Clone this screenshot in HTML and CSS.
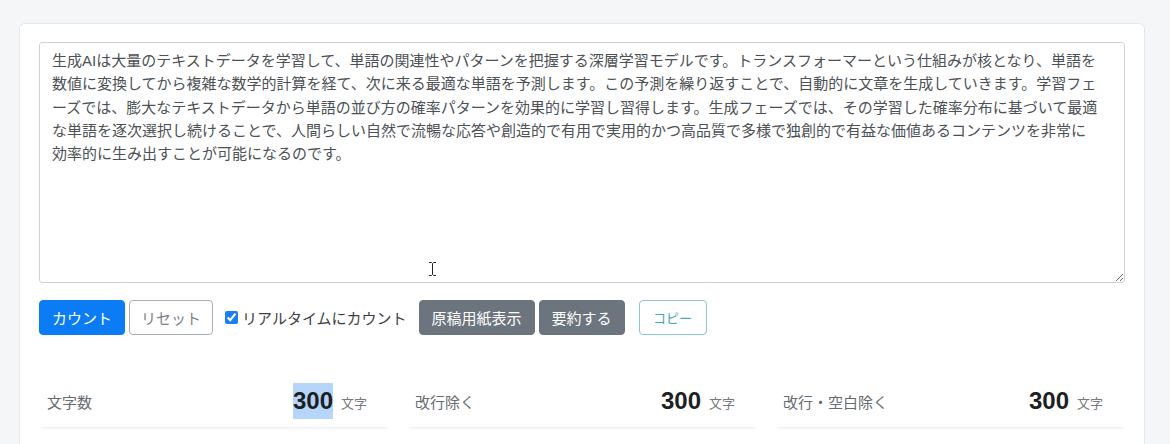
FILE: index.html
```html
<!DOCTYPE html>
<html lang="ja">
<head>
<meta charset="utf-8">
<title>文字数カウント</title>
<link rel="stylesheet" href="styles.css">
</head>
<body>
<main class="card">
  <div class="editor">
    <textarea class="text-input" spellcheck="false">生成AIは大量のテキストデータを学習して、単語の関連性やパターンを把握する深層学習モデルです。トランスフォーマーという仕組みが核となり、単語を数値に変換してから複雑な数学的計算を経て、次に来る最適な単語を予測します。この予測を繰り返すことで、自動的に文章を生成していきます。学習フェーズでは、膨大なテキストデータから単語の並び方の確率パターンを効果的に学習し習得します。生成フェーズでは、その学習した確率分布に基づいて最適な単語を逐次選択し続けることで、人間らしい自然で流暢な応答や創造的で有用で実用的かつ高品質で多様で独創的で有益な価値あるコンテンツを非常に
効率的に生み出すことが可能になるのです。</textarea>
    <svg class="ibeam" width="9" height="16" viewBox="0 0 9 16" aria-hidden="true">
      <path d="M1 1.5h2.5L4.5 2.5L5.5 1.5H8M4.5 2.5v11M1 14.5h2.5L4.5 13.5L5.5 14.5H8" fill="none" stroke="#fff" stroke-width="2.4"/>
      <path d="M1 1.5h2.5L4.5 2.5L5.5 1.5H8M4.5 2.5v11M1 14.5h2.5L4.5 13.5L5.5 14.5H8" fill="none" stroke="#222" stroke-width="1"/>
    </svg>
  </div>

  <div class="toolbar">
    <button class="btn btn-primary">カウント</button>
    <button class="btn btn-outline">リセット</button>
    <label class="check"><input type="checkbox" checked><span>リアルタイムにカウント</span></label>
    <button class="btn btn-secondary">原稿用紙表示</button>
    <button class="btn btn-secondary">要約する</button>
    <button class="btn btn-info-outline">コピー</button>
  </div>

  <div class="stats">
    <div class="stat">
      <span class="stat-label">文字数</span>
      <span class="stat-value"><span class="num selected">300</span><span class="unit">文字</span></span>
    </div>
    <div class="stat">
      <span class="stat-label">改行除く</span>
      <span class="stat-value"><span class="num">300</span><span class="unit">文字</span></span>
    </div>
    <div class="stat">
      <span class="stat-label">改行・空白除く</span>
      <span class="stat-value"><span class="num">300</span><span class="unit">文字</span></span>
    </div>
  </div>
</main>
</body>
</html>
```

FILE: styles.css
```css
* {
  box-sizing: border-box;
}

html, body {
  height: 100%;
}

body {
  margin: 0;
  background: #f5f6f8;
  font-family: "Noto Sans CJK JP", "Liberation Sans", sans-serif;
  padding: 23px 25px 0 19px;
  overflow: hidden;
}

.card {
  width: 1126px;
  background: #ffffff;
  border: 1px solid #e4e6ea;
  border-radius: 6px;
  padding: 18px 19px 60px;
}

.editor {
  position: relative;
}

.text-input {
  display: block;
  width: 1086px;
  height: 241px;
  padding: 6px 24px 6px 12px;
  border: 1px solid #cfd3d8;
  border-radius: 3px;
  font-family: "Liberation Sans", "Noto Sans CJK JP", sans-serif;
  font-size: 15px;
  line-height: 23.3px;
  color: #4c5156;
  background: #fff;
  resize: vertical;
  line-break: anywhere;
  outline: none;
}

.ibeam {
  position: absolute;
  left: 389px;
  top: 219px;
}

.toolbar {
  display: flex;
  align-items: center;
  margin-top: 17px;
  height: 35px;
}

.btn {
  height: 35px;
  padding: 0 12px;
  border: 1px solid transparent;
  border-radius: 4px;
  font-family: "Noto Sans CJK JP", sans-serif;
  font-size: 15px;
  line-height: 33px;
  background: #fff;
  cursor: pointer;
  margin-right: 4px;
  white-space: nowrap;
}

.btn-primary {
  background: #0b7cf6;
  border-color: #0b7cf6;
  color: #fff;
}

.btn-outline {
  border-color: #a9aeb3;
  color: #7d8287;
  padding: 0 11px;
}

.btn-secondary {
  background: #6c757d;
  border-color: #6c757d;
  color: #fff;
}

.btn-info-outline {
  border-color: #8cc6d3;
  color: #4aa6c6;
  font-size: 13px;
  width: 68px;
  padding: 0;
  margin-left: 10px;
}

.check {
  display: flex;
  align-items: center;
  margin-left: 5px;
  margin-right: 12px;
  font-size: 15px;
  color: #3c4045;
  white-space: nowrap;
}

.check input {
  width: 13px;
  height: 13px;
  margin: 0 4px 0 3px;
  accent-color: #1a7ef2;
}

.stats {
  display: grid;
  grid-template-columns: repeat(3, 1fr);
  column-gap: 18px;
  margin-top: 40px;
}

.stat {
  display: flex;
  align-items: center;
  justify-content: space-between;
  padding: 8px 22px 8px 8px;
  background: #fff;
  box-shadow: 0 3px 3px -2px rgba(0, 0, 0, 0.09);
}

.stat-label {
  font-size: 15px;
  color: #666b70;
}

.stat-value {
  display: flex;
  align-items: center;
  gap: 8px;
}

.num {
  font-family: "Liberation Sans", sans-serif;
  font-weight: bold;
  font-size: 24px;
  line-height: 36px;
  color: #1d1f22;
}

.num.selected {
  background: #b5d5fb;
}

.unit {
  font-size: 13px;
  color: #777b80;
  padding-top: 2px;
}
```
